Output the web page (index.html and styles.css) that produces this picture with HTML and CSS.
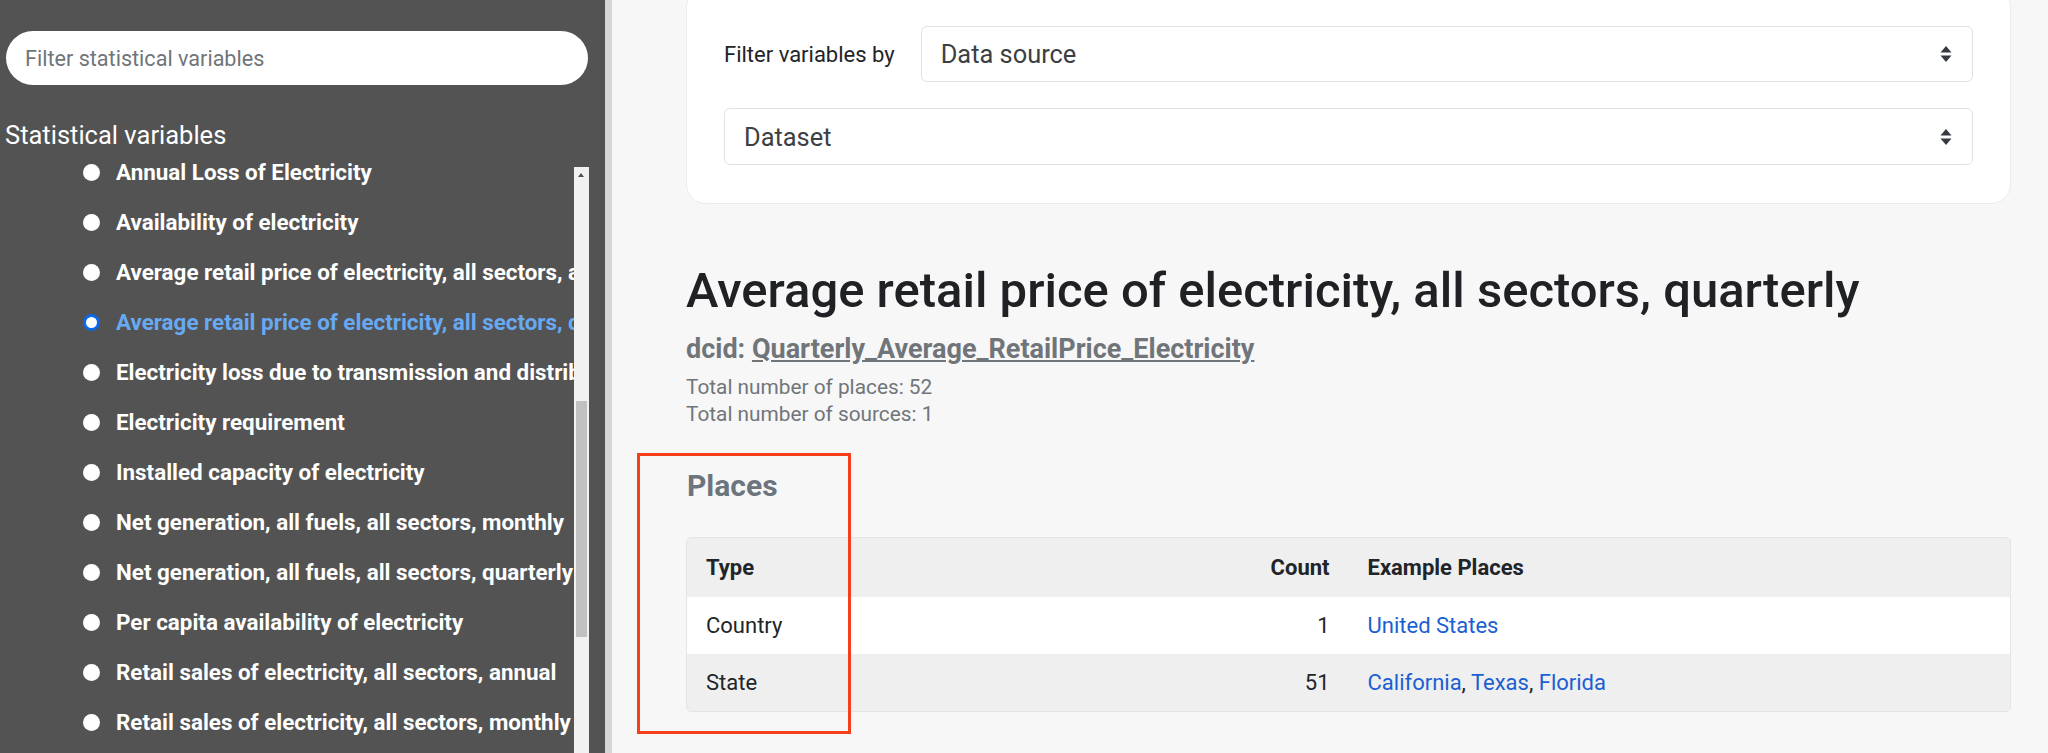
FILE: index.html
```html
<!DOCTYPE html>
<html lang="en">
<head>
<meta charset="utf-8">
<title>Statistical variables</title>
<link rel="stylesheet" href="styles.css">
</head>
<body>
<aside class="sidebar">
  <div class="search">Filter statistical variables</div>
  <h2 class="sv-title">Statistical variables</h2>
  <div class="sv-box">
    <ul class="sv-list">
      <li class="sv-item"><span class="radio"></span><span class="sv-label">Annual Loss of Electricity</span></li>
      <li class="sv-item"><span class="radio"></span><span class="sv-label">Availability of electricity</span></li>
      <li class="sv-item"><span class="radio"></span><span class="sv-label">Average retail price of electricity, all sectors, annual</span></li>
      <li class="sv-item selected"><span class="radio"></span><span class="sv-label">Average retail price of electricity, all sectors, quarterly</span></li>
      <li class="sv-item"><span class="radio"></span><span class="sv-label">Electricity loss due to transmission and distribution</span></li>
      <li class="sv-item"><span class="radio"></span><span class="sv-label">Electricity requirement</span></li>
      <li class="sv-item"><span class="radio"></span><span class="sv-label">Installed capacity of electricity</span></li>
      <li class="sv-item"><span class="radio"></span><span class="sv-label">Net generation, all fuels, all sectors, monthly</span></li>
      <li class="sv-item"><span class="radio"></span><span class="sv-label">Net generation, all fuels, all sectors, quarterly</span></li>
      <li class="sv-item"><span class="radio"></span><span class="sv-label">Per capita availability of electricity</span></li>
      <li class="sv-item"><span class="radio"></span><span class="sv-label">Retail sales of electricity, all sectors, annual</span></li>
      <li class="sv-item"><span class="radio"></span><span class="sv-label">Retail sales of electricity, all sectors, monthly</span></li>
      <li class="sv-item"><span class="radio"></span><span class="sv-label">Retail sales of electricity, all sectors, quarterly</span></li>
    </ul>
    <div class="scrollbar">
      <div class="sb-arrow"></div>
      <div class="sb-track"><div class="sb-thumb"></div></div>
    </div>
  </div>
</aside>
<main class="main">
  <section class="card">
    <div class="filter-row">
      <span class="filter-label">Filter variables by</span>
      <div class="select grow"><span>Data source</span>
        <svg class="sel-arrow" width="12" height="16" viewBox="0 0 12 16"><path d="M6 0 L11.5 6.5 H0.5 Z M0.5 9.5 H11.5 L6 16 Z" fill="#343a40"/></svg>
      </div>
    </div>
    <div class="select"><span>Dataset</span>
      <svg class="sel-arrow" width="12" height="16" viewBox="0 0 12 16"><path d="M6 0 L11.5 6.5 H0.5 Z M0.5 9.5 H11.5 L6 16 Z" fill="#343a40"/></svg>
    </div>
  </section>

  <h1 class="sv-heading">Average retail price of electricity, all sectors, quarterly</h1>
  <div class="dcid">dcid: <a href="#">Quarterly_Average_RetailPrice_Electricity</a></div>
  <div class="totals">
    <div>Total number of places: 52</div>
    <div>Total number of sources: 1</div>
  </div>

  <h3 class="places-title">Places</h3>
  <div class="table">
    <div class="tr head">
      <div class="td">Type</div>
      <div class="td num">Count</div>
      <div class="td">Example Places</div>
    </div>
    <div class="tr">
      <div class="td">Country</div>
      <div class="td num">1</div>
      <div class="td"><a href="#">United States</a></div>
    </div>
    <div class="tr alt">
      <div class="td">State</div>
      <div class="td num">51</div>
      <div class="td"><a href="#">California</a>, <a href="#">Texas</a>, <a href="#">Florida</a></div>
    </div>
  </div>
</main>
<div class="highlight"></div>
</body>
</html>
```
FILE: styles.css
```css
* { box-sizing: border-box; }
html, body { margin: 0; padding: 0; }
body {
  width: 2048px;
  height: 753px;
  overflow: hidden;
  display: flex;
  font-family: Roboto, "Open Sans", sans-serif;
  background: #f7f7f7;
  position: relative;
}

/* Sidebar */
.sidebar {
  width: 612px;
  flex: none;
  height: 753px;
  background: #535353;
  border-right: 7px solid #d6d6d6;
  display: flex;
  flex-direction: column;
  overflow: hidden;
}
.search {
  margin: 31px 17px 0 6px;
  height: 54px;
  border-radius: 27px;
  background: #fff;
  display: flex;
  align-items: center;
  padding-left: 19px;
  font-size: 21.6px;
  color: #70757a;
}
.sv-title {
  margin: 35px 0 0 5px;
  font-size: 25.5px;
  line-height: 30px;
  font-weight: 400;
  color: #fff;
}
.sv-box {
  flex: 1;
  display: flex;
  min-height: 0;
  margin-top: -3px;
  padding-right: 16px;
}
.sv-list {
  list-style: none;
  margin: 0;
  padding: 0 0 0 83px;
  flex: 1;
  min-width: 0;
  overflow: hidden;
}
.sv-item {
  display: flex;
  align-items: center;
  height: 50px;
  white-space: nowrap;
  color: #fff;
  font-weight: 700;
  font-size: 22.4px;
}
.radio {
  flex: none;
  width: 17px;
  height: 17px;
  border-radius: 50%;
  background: #fff;
  margin-right: 16px;
}
.sv-item.selected { color: #67a9f2; }
.sv-item.selected .radio {
  border: 3px solid #0b68e8;
  background: #fff;
}
.scrollbar {
  flex: none;
  width: 15px;
  margin-top: 20px;
  background: #f1f1f1;
  display: flex;
  flex-direction: column;
}
.sb-arrow {
  height: 17px;
  position: relative;
}
.sb-arrow::after {
  content: "";
  position: absolute;
  left: 4px;
  top: 6px;
  border-left: 3.5px solid transparent;
  border-right: 3.5px solid transparent;
  border-bottom: 4px solid #505050;
}
.sb-track { flex: 1; padding-top: 217px; }
.sb-thumb {
  margin: 0 2px;
  height: 236px;
  background: #c1c1c1;
}

/* Main */
.main {
  flex: 1;
  min-width: 0;
  padding: 0 37px 0 74px;
  color: #202124;
}
.card {
  margin-top: -13px;
  background: #fff;
  border: 1px solid #ebebeb;
  border-radius: 20px;
  padding: 38px 37px 38px 37px;
}
.filter-row {
  display: flex;
  align-items: center;
  gap: 26px;
  margin-bottom: 26px;
}
.filter-label {
  font-size: 22px;
  color: #212529;
  white-space: nowrap;
}
.select {
  height: 57px;
  border: 1px solid #dee2e6;
  border-radius: 6px;
  background: #fff;
  display: flex;
  align-items: center;
  justify-content: space-between;
  padding: 0 20px 0 19px;
  font-size: 25.4px;
  color: #3c4043;
}
.select.grow { flex: 1; height: 56px; }
.sel-arrow { flex: none; }

.sv-heading {
  margin: 59px 0 0;
  font-size: 49px;
  line-height: 56px;
  font-weight: 500;
  color: #202124;
}
.dcid {
  margin-top: 13px;
  font-size: 27px;
  line-height: 34px;
  font-weight: 700;
  color: #70757a;
}
.dcid a { color: #70757a; text-decoration: underline; }
.totals {
  margin-top: 8px;
  font-size: 20.8px;
  line-height: 27px;
  color: #70757a;
}
.places-title {
  margin: 40px 0 0 1px;
  font-size: 30px;
  line-height: 36px;
  font-weight: 700;
  color: #6c757d;
}
.table {
  margin-top: 33px;
  border: 1px solid #e4e4e4;
  border-radius: 5px;
  overflow: hidden;
  font-size: 22px;
  color: #212529;
}
.tr {
  display: grid;
  grid-template-columns: 1fr auto 50%;
  background: #fff;
}
.tr.head { background: #efefef; font-weight: 700; }
.tr.alt { background: #efefef; }
.td {
  padding: 15px 19px;
  line-height: 27px;
}
.tr.head .td { padding: 16px 19px; }
.td.num { text-align: right; min-width: 100px; }
.td a { color: #1a5fd3; text-decoration: none; }

/* annotation overlay */
.highlight {
  position: absolute;
  left: 637px;
  top: 453px;
  width: 214px;
  height: 281px;
  border: 3px solid #f5401b;
  pointer-events: none;
}
```
